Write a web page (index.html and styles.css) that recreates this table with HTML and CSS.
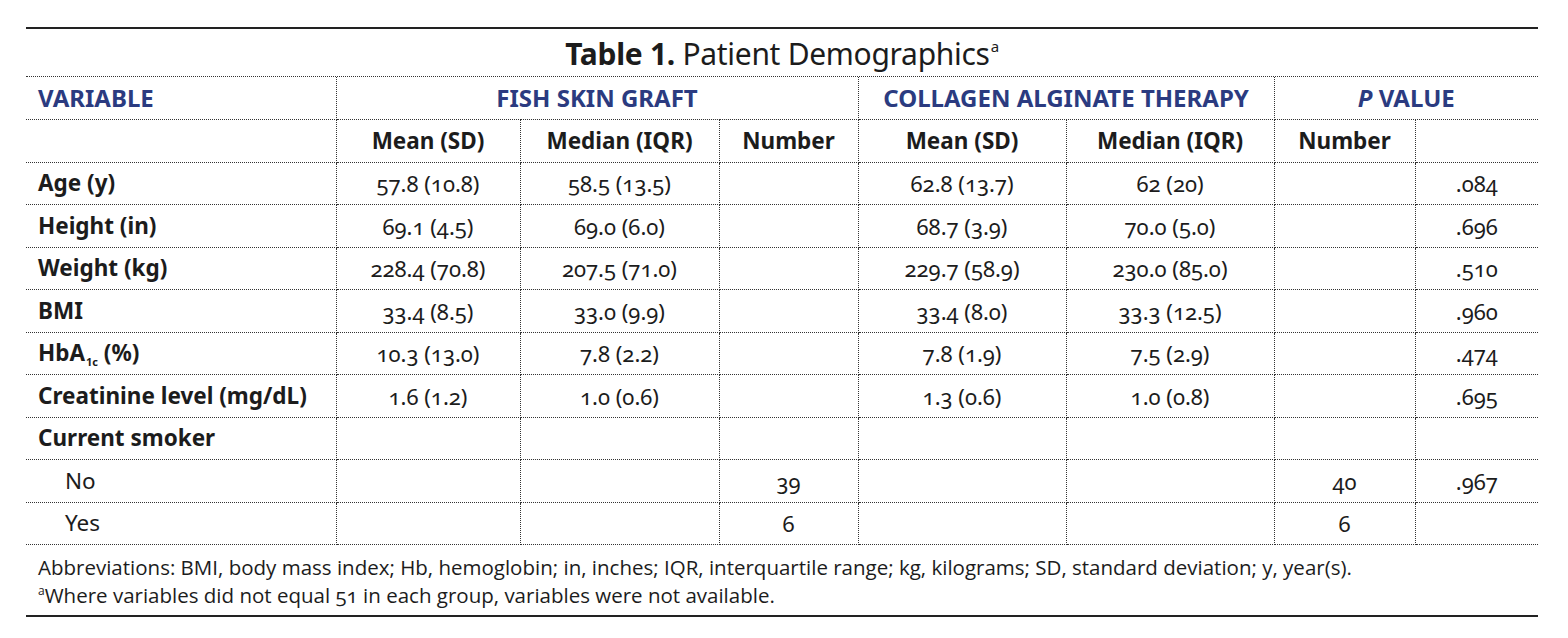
FILE: index.html
```html
<!DOCTYPE html>
<html lang="en">
<head>
<meta charset="utf-8">
<title>Table 1. Patient Demographics</title>
<link rel="stylesheet" href="styles.css">
</head>
<body>
<div class="page">
  <div class="frame">
    <h1 class="title"><b>Table 1.</b> Patient Demographics<sup>a</sup></h1>
    <table class="tbl">
      <colgroup>
        <col class="c-var">
        <col class="c-fm">
        <col class="c-fmed">
        <col class="c-fn">
        <col class="c-cm">
        <col class="c-cmed">
        <col class="c-cn">
        <col class="c-p">
      </colgroup>
      <thead>
        <tr class="grp">
          <th class="lab">VARIABLE</th>
          <th colspan="3">FISH SKIN GRAFT</th>
          <th colspan="2">COLLAGEN ALGINATE THERAPY</th>
          <th colspan="2"><i>P</i> VALUE</th>
        </tr>
        <tr class="sub">
          <th class="lab"></th>
          <th>Mean (SD)</th>
          <th>Median (IQR)</th>
          <th>Number</th>
          <th>Mean (SD)</th>
          <th>Median (IQR)</th>
          <th>Number</th>
          <th></th>
        </tr>
      </thead>
      <tbody>
        <tr><th class="lab">Age (y)</th><td>57.8 (10.8)</td><td>58.5 (13.5)</td><td></td><td>62.8 (13.7)</td><td>62 (20)</td><td></td><td>.084</td></tr>
        <tr><th class="lab">Height (in)</th><td>69.1 (4.5)</td><td>69.0 (6.0)</td><td></td><td>68.7 (3.9)</td><td>70.0 (5.0)</td><td></td><td>.696</td></tr>
        <tr><th class="lab">Weight (kg)</th><td>228.4 (70.8)</td><td>207.5 (71.0)</td><td></td><td>229.7 (58.9)</td><td>230.0 (85.0)</td><td></td><td>.510</td></tr>
        <tr><th class="lab">BMI</th><td>33.4 (8.5)</td><td>33.0 (9.9)</td><td></td><td>33.4 (8.0)</td><td>33.3 (12.5)</td><td></td><td>.960</td></tr>
        <tr><th class="lab">HbA<sub>1c</sub> (%)</th><td>10.3 (13.0)</td><td>7.8 (2.2)</td><td></td><td>7.8 (1.9)</td><td>7.5 (2.9)</td><td></td><td>.474</td></tr>
        <tr><th class="lab">Creatinine level (mg/dL)</th><td>1.6 (1.2)</td><td>1.0 (0.6)</td><td></td><td>1.3 (0.6)</td><td>1.0 (0.8)</td><td></td><td>.695</td></tr>
        <tr><th class="lab">Current smoker</th><td></td><td></td><td></td><td></td><td></td><td></td><td></td></tr>
        <tr><th class="lab sublab">No</th><td></td><td></td><td>39</td><td></td><td></td><td>40</td><td>.967</td></tr>
        <tr><th class="lab sublab">Yes</th><td></td><td></td><td>6</td><td></td><td></td><td>6</td><td></td></tr>
      </tbody>
    </table>
    <div class="notes">
      <p>Abbreviations: BMI, body mass index; Hb, hemoglobin; in, inches; IQR, interquartile range; kg, kilograms; SD, standard deviation; y, year(s).</p>
      <p><sup>a</sup>Where variables did not equal 51 in each group, variables were not available.</p>
    </div>
  </div>
</div>
</body>
</html>
```

FILE: styles.css
```css
html, body {
  margin: 0;
  padding: 0;
  background: #ffffff;
}

.page {
  padding: 27px 30px 0 26px;
  font-family: "Noto Sans", "Open Sans", sans-serif;
  color: #1c1c1c;
}

.frame {
  width: 1512px;
  border-top: 2px solid #222222;
  border-bottom: 2px solid #222222;
}

.title {
  margin: 0;
  height: 47px;
  font-size: 30px;
  font-weight: 400;
  line-height: 50px;
  text-align: center;
  letter-spacing: -0.3px;
  border-bottom: 1px dotted #333333;
}

.title b {
  font-weight: 700;
}

.title sup {
  font-size: 15px;
  vertical-align: 0;
  position: relative;
  top: -13px;
  margin-left: 1px;
}

.tbl {
  width: 1512px;
  border-collapse: collapse;
  table-layout: fixed;
}

.c-var { width: 310px; }
.c-fm { width: 184px; }
.c-fmed { width: 199px; }
.c-fn { width: 139px; }
.c-cm { width: 208px; }
.c-cmed { width: 208px; }
.c-cn { width: 141px; }
.c-p { width: 123px; }

.tbl tr {
  height: 42.5px;
}

.tbl th,
.tbl td {
  padding: 0;
  border: 1px dotted #333333;
  text-align: center;
  vertical-align: middle;
  font-size: 22.5px;
  line-height: 26px;
}

.tbl tr > :first-child {
  border-left: none;
}

.tbl tr > :last-child {
  border-right: none;
}

.tbl thead tr:first-child > * {
  border-top: none;
}

.tbl th {
  font-weight: 700;
}

.grp th {
  color: #2b3b80;
  font-size: 24px;
}

.grp th i {
  font-style: italic;
}

.tbl th.lab {
  text-align: left;
  padding-left: 12px;
}

.tbl th.sublab {
  padding-left: 39px;
  font-weight: 400;
}

.tbl td {
  font-weight: 400;
  font-size: 22px;
  font-variant-numeric: oldstyle-nums tabular-nums;
}

.tbl sub {
  font-size: 11px;
  vertical-align: -5px;
  line-height: 0;
  margin-left: 1px;
}

.notes {
  padding: 8px 0 2px 12px;
  font-family: "Open Sans", "Noto Sans", sans-serif;
  font-size: 20.5px;
  line-height: 28px;
  font-stretch: 94%;
  font-variant-numeric: oldstyle-nums;
}

.notes p {
  margin: 0;
}

.notes sup {
  font-size: 12px;
  vertical-align: 0;
  position: relative;
  top: -8px;
}
```
